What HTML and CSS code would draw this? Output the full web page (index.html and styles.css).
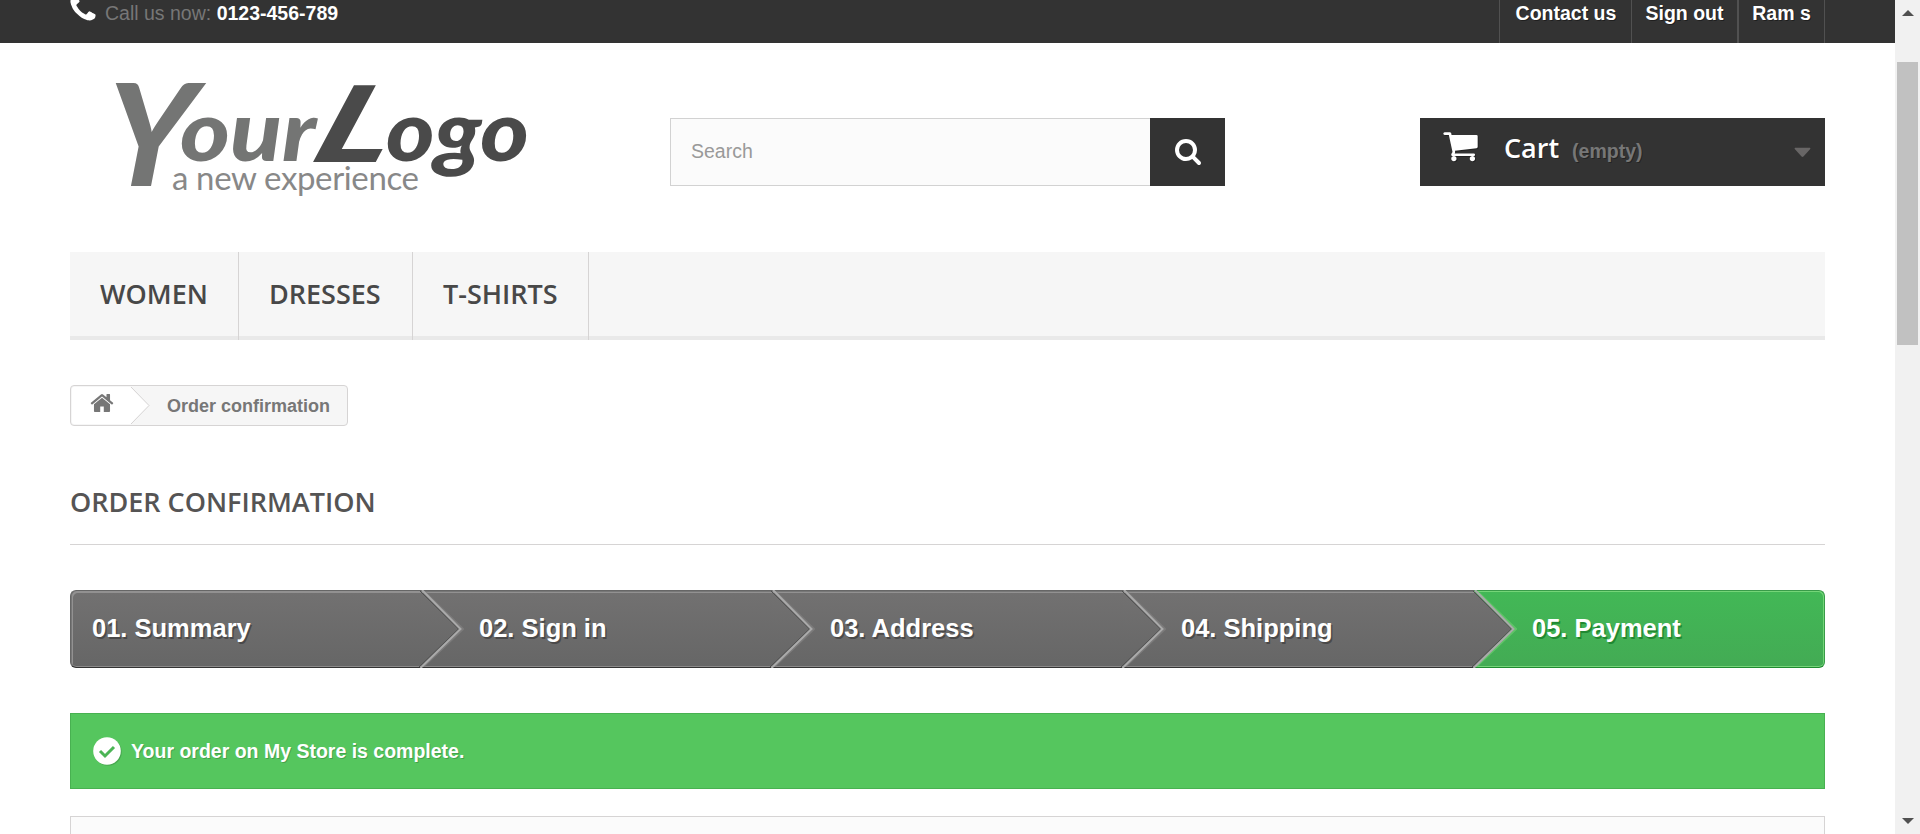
FILE: index.html
```html
<!DOCTYPE html>
<html lang="en">
<head>
<meta charset="utf-8">
<title>Order confirmation - My Store</title>
<link rel="stylesheet" href="styles.css">
</head>
<body>
<div class="window">
  <div class="page">
    <div class="topbar">
      <div class="container topbar-row">
        <div class="phone">
          <svg class="phone-icon" viewBox="0 0 1792 1792"><path d="M1600 1240q0 27-10 70.5t-21 68.5q-21 50-122 106-94 51-186 51-27 0-53-3.5t-57.5-12.5-47-14.5-55.5-20.5-49-18q-98-35-175-83-127-79-264-216t-216-264q-48-77-83-175-3-9-18-49t-20.5-55.5-14.5-47-12.5-57.5-3.5-53q0-92 51-186 56-101 106-122 25-11 68.500-21t70.500-10q14 0 21 3 18 6 53 76 11 19 30 54t35 63.500 31 53.500q3 4 17.500 25t21.500 35.500 7 28.500q0 20-28.500 50t-62 55-62 53-28.500 46q0 9 5 22.500t8.500 20.500 14 24 11.500 19q76 137 174 235t235 174q2 1 19 11.500t24 14 20.500 8.500 22.500 5q18 0 46-28.500t53-62 55-62 50-28.500q14 0 28.500 7t35.500 21.500 25 17.500q25 15 53.500 31t63.500 35 54 30q70 35 76 53 3 7 3 21z"/></svg>
          <span>Call us now: <b>0123-456-789</b></span>
        </div>
        <nav class="user-nav">
          <a class="contact">Contact us</a><a class="signout">Sign out</a><a class="account">Ram s</a>
        </nav>
      </div>
    </div>

    <header class="container header">
      <svg class="logo" viewBox="0 0 440 130" role="img" aria-label="YourLogo a new experience">
        <g class="logo-light">
          <text transform="translate(27 104) skewX(-11)" class="logo-y" textLength="88" lengthAdjust="spacingAndGlyphs">Y</text>
          <text x="110" y="79" class="logo-small" textLength="136" lengthAdjust="spacingAndGlyphs">our</text>
        </g>
        <g class="logo-dark">
          <text transform="translate(232 80) skewX(-28)" class="logo-l" textLength="76" lengthAdjust="spacingAndGlyphs">L</text>
          <text x="316" y="79" class="logo-small" textLength="143" lengthAdjust="spacingAndGlyphs">ogo</text>
        </g>
        <text x="102" y="108" class="logo-tag" textLength="247">a new experience</text>
      </svg>
      <form class="search">
        <span class="search-field">Search</span>
        <span class="search-button"><svg class="search-icon" viewBox="0 0 1792 1792"><path d="M1216 832q0-185-131.500-316.500t-316.500-131.500-316.500 131.500-131.500 316.500 131.500 316.500 316.500 131.500 316.500-131.500 131.500-316.500zm512 832q0 52-38 90t-90 38q-54 0-90-38l-343-342q-179 124-399 124-143 0-273.500-55.500t-225-150-150-225-55.500-273.500 55.500-273.500 150-225 225-150 273.500-55.500 273.500 55.500 225 150 150 225 55.500 273.500q0 220-124 399l343 343q37 37 37 90z"/></svg></span>
      </form>
      <a class="cart">
        <svg class="cart-icon" viewBox="0 0 1792 1792"><path d="M704 1536q0 52-38 90t-90 38-90-38-38-90 38-90 90-38 90 38 38 90zm896 0q0 52-38 90t-90 38-90-38-38-90 38-90 90-38 90 38 38 90zm128-1088v512q0 24-16.500 42.500t-40.500 21.500l-1044 122q13 60 13 70 0 16-24 64h920q26 0 45 19t19 45-19 45-45 19h-1024q-26 0-45-19t-19-45q0-11 8-31.500t16-36 21.500-40 15.500-29.500l-177-823h-204q-26 0-45-19t-19-45 19-45 45-19h256q16 0 28.500 6.500t19.500 15.500 13 24.500 8 26 5.500 29.500 4.500 26h1201q26 0 45 19t19 45z"/></svg>
        <b class="cart-title">Cart</b>
        <span class="cart-empty">(empty)</span>
        <svg class="cart-caret" viewBox="0 0 18 11"><path d="M1.200 0.500H16.800Q18 1 17 2L10 9.800Q9 10.800 8 9.800L1 2Q0 1 1.200 0.500z"/></svg>
      </a>
    </header>

    <nav class="container menu">
      <a class="menu-women">Women</a><a class="menu-dresses">Dresses</a><a class="menu-shirts">T-shirts</a>
    </nav>

    <main class="container main">
      <div class="breadcrumb">
        <svg class="crumb-home" viewBox="0 0 79 39"><path class="crumb-bg" d="M3 1H60L78 19.500L60 38H3Q1 38 1 36V3Q1 1 3 1z"/><path class="crumb-line" d="M60 1L78 19.500L60 38"/>
          <svg x="18.500" y="4.500" width="25" height="25" viewBox="0 0 1792 1792"><path class="home-icon" d="M1472 992v480q0 26-19 45t-45 19h-384v-384h-256v384h-384q-26 0-45-19t-19-45v-480q0-1 .5-3t.5-3l575-474 575 474q1 2 1 6zm223-69l-62 74q-8 9-21 11h-3q-13 0-21-7l-692-577-692 577q-12 8-24 7-13-2-21-11l-62-74q-8-10-7-23.500t11-21.500l719-599q32-26 76-26t76 26l244 204v-195q0-14 9-23t23-9h192q14 0 23 9t9 23v408l219 182q10 8 11 21.500t-7 23.500z"/></svg>
        </svg>
        <span>Order confirmation</span>
      </div>

      <h1 class="heading">Order confirmation</h1>

      <svg class="defs" width="0" height="0"><linearGradient id="step-fill" x1="0" y1="0" x2="0" y2="1"><stop offset="0" stop-color="#727171"/><stop offset="1" stop-color="#666"/></linearGradient></svg>
      <ol class="steps">
        <li class="step">01. Summary<svg class="arrow" viewBox="0 0 46 78"><path class="fill" d="M3 3L41 39L3 76z"/><path class="glow" d="M8 3L45 39L6 76"/><path class="edge" d="M2 1L40.500 39L1 77"/><path class="light" d="M4 0L42.500 39L2.500 78"/></svg></li>
        <li class="step">02. Sign in<svg class="arrow" viewBox="0 0 46 78"><path class="fill" d="M3 3L41 39L3 76z"/><path class="glow" d="M8 3L45 39L6 76"/><path class="edge" d="M2 1L40.500 39L1 77"/><path class="light" d="M4 0L42.500 39L2.500 78"/></svg></li>
        <li class="step">03. Address<svg class="arrow" viewBox="0 0 46 78"><path class="fill" d="M3 3L41 39L3 76z"/><path class="glow" d="M8 3L45 39L6 76"/><path class="edge" d="M2 1L40.500 39L1 77"/><path class="light" d="M4 0L42.500 39L2.500 78"/></svg></li>
        <li class="step">04. Shipping<svg class="arrow arrow-green" viewBox="0 0 46 78"><path class="fill" d="M3 1L41 39L3 77z"/><path class="glow" d="M8 3L45 39L6 76"/><path class="edge" d="M2 1L40.500 39L1 77"/><path class="light" d="M4 0L42.500 39L2.500 78"/></svg></li>
        <li class="step current">05. Payment</li>
      </ol>

      <p class="alert">
        <svg class="check" viewBox="0 0 28 28"><circle cx="14" cy="14" r="13.800"/><path d="M7 14L12 19L21 10"/></svg>
        <span>Your order on My Store is complete.</span>
      </p>
      <div class="box"></div>
    </main>
  </div>
  <div class="scrollbar">
    <svg class="up" viewBox="0 0 12 6"><path d="M6 0L12 6H0z"/></svg>
    <div class="thumb"></div>
    <svg class="down" viewBox="0 0 12 6"><path d="M0 0H12L6 6z"/></svg>
  </div>
</div>
</body>
</html>
```
FILE: styles.css
```css
* { box-sizing: border-box; }
body { margin: 0; background: #fff; color: #777; font: 19.5px/27px "Liberation Sans", Arial, sans-serif; }
.window { display: flex; height: 834px; overflow: hidden; }
.page { width: 1895px; overflow: hidden; }
.container { width: 1755px; margin: 0 0 0 70px; }

.topbar { height: 43px; background: #333; }
.topbar-row { display: flex; justify-content: space-between; height: 43px; }
.phone { display: flex; height: 27px; white-space: pre; color: #777; }
.phone b { color: #fff; }
.phone-icon { width: 32px; height: 32px; margin: -7px 6px 0 -3px; fill: #fff; flex: none; }
.user-nav { display: flex; border-left: 1px solid #515151; }
.user-nav a { border-right: 1px solid #515151; color: #fff; font-weight: bold; text-shadow: 1px 1px rgba(0, 0, 0, .4); text-align: center; height: 43px; white-space: nowrap; }
.user-nav .contact { width: 132px; padding-left: 1px; }
.signout { width: 107px; }
.user-nav .signout { border-right-width: 2px; }
.account { width: 86px; }

.header { display: flex; height: 209px; }
.logo { width: 440px; height: 130px; margin: 39px 160px 0 0; overflow: visible; flex: none; }
.logo-light { fill: #747574; }
.logo-dark { fill: #4a4a4a; }
.logo text { font-family: Lato, sans-serif; }
.logo .logo-small { font-size: 84px; font-weight: 900; font-style: italic; }
.logo .logo-y { font-size: 142px; font-weight: 900; }
.logo .logo-l { font-size: 106px; font-weight: 900; }
.logo .logo-tag { font-size: 33px; fill: #888; }
.search { display: flex; width: 555px; height: 68px; margin: 75px 195px 0 0; flex: none; }
.search-field { width: 480px; padding: 19px 20px; border: 1px solid #d2d2d2; border-right: 0; background: #fbfbfb; color: #999; }
.search-button { display: flex; justify-content: center; align-items: center; width: 75px; background: #333; }
.search-icon { width: 28px; height: 28px; margin-top: -2px; fill: #fff; }
.cart { display: flex; width: 405px; height: 68px; margin-top: 75px; padding-left: 22px; background: #333; flex: none; }
.cart-icon { width: 37px; height: 37px; margin-top: 9px; fill: #fff; filter: drop-shadow(1px 1px 0 rgba(0, 0, 0, .3)); }
.cart-title { margin: 13px 0 0 25px; font: 600 27px/34px "Open Sans", sans-serif; color: #fff; text-shadow: 1px 1px rgba(0, 0, 0, .3); }
.cart-empty { margin: 20px 0 0 13px; font-weight: bold; color: #777; text-shadow: 1px 1px rgba(0, 0, 0, .3); }
.cart-caret { width: 17px; height: 11px; margin: 29px 14px 0 auto; fill: #686666; }

.menu { display: flex; height: 88px; background: linear-gradient(#f6f6f6 84px, #e9e9e9 84px); }
.menu a { border-right: 1px solid #d6d4d4; padding: 23px 0 0 30px; font: 600 27px/37px "Open Sans", sans-serif; color: #484848; text-transform: uppercase; }
.menu-women { width: 169px; }
.menu-dresses { width: 174px; }
.menu-shirts { width: 176px; }

.main { padding-top: 45px; }
.breadcrumb { display: flex; width: 278px; height: 41px; border: 1px solid #d6d4d4; border-radius: 4px; background: #f6f6f6; font-size: 18px; line-height: 40px; font-weight: bold; white-space: nowrap; }
.crumb-home { width: 79px; height: 39px; margin-right: 17px; flex: none; }
.crumb-bg { fill: #fff; }
.crumb-line { fill: none; stroke: #d6d4d4; }
.home-icon { fill: #777; }
.heading { margin: 58px 0 45px; padding-bottom: 24px; height: 61px; border-bottom: 1px solid #d6d4d4; font: 600 27px/36px "Open Sans", sans-serif; color: #555454; text-transform: uppercase; }
.defs { display: block; }
.steps { display: flex; margin: 0; padding: 0; list-style: none; }
.step { position: relative; width: 351px; height: 78px; padding-left: 58px; border-top: 1px solid #666; border-bottom: 1px solid #333; background: linear-gradient(#727171, #666); box-shadow: inset 0 1px #777, inset 0 2px #929191, inset 0 -1px #8b8a8a; font: bold 25.500px/74px "Liberation Sans", Arial, sans-serif; color: #fff; text-shadow: 1.500px 1.500px #4a4949; }
.step:first-child { padding-left: 21px; border-left: 1px solid #666; border-radius: 6px 0 0 6px; box-shadow: inset 1px 0 #777, inset 2px 2px #929191, inset 0 -1px #8b8a8a; }
.step.current { border: 1px solid #399b49; border-bottom-color: #208931; border-left: 0; border-radius: 0 6px 6px 0; background: linear-gradient(#42b856, #43ab54); box-shadow: inset -1px 1px #74d578, inset 0 -1px #74d578; text-shadow: 1.500px 1.500px #208931; }
.arrow { position: absolute; left: 348px; top: -1px; width: 46px; height: 78px; z-index: 1; }
.step:first-child .arrow { left: 347px; }
.arrow path { fill: none; }
.arrow .fill { fill: url(#step-fill); }
.arrow .glow { stroke: #7c7b7b; stroke-width: 2; }
.arrow .edge { stroke: #505050; stroke-width: 1; }
.arrow .light { stroke: #aaa; stroke-width: 2; }
.arrow-green .glow { stroke: #60c468; }

.alert { display: flex; align-items: center; height: 76px; margin: 45px 0 27px; padding: 0 22px; border: 1px solid #48b151; background: #55c65e; color: #fff; font-weight: bold; text-shadow: 1px 1px rgba(0, 0, 0, .2); }
.check { width: 28px; height: 28px; margin-right: 10px; fill: #fff; filter: drop-shadow(1px 1px 0 rgba(0, 0, 0, .15)); }
.check path { fill: none; stroke: #4cb556; stroke-width: 3; }
.box { height: 100px; border: 1px solid #d6d4d4; background: #fbfbfb; }

.scrollbar { display: flex; flex-direction: column; align-items: center; width: 25px; background: #f1f1f1; padding-bottom: 10px; }
.scrollbar svg { width: 12px; height: 6px; margin-top: 10px; fill: #505050; flex: none; }
.scrollbar .down { margin-top: auto; }
.thumb { width: 21px; height: 283px; margin-top: 46px; background: #c1c1c1; flex: none; }
```
